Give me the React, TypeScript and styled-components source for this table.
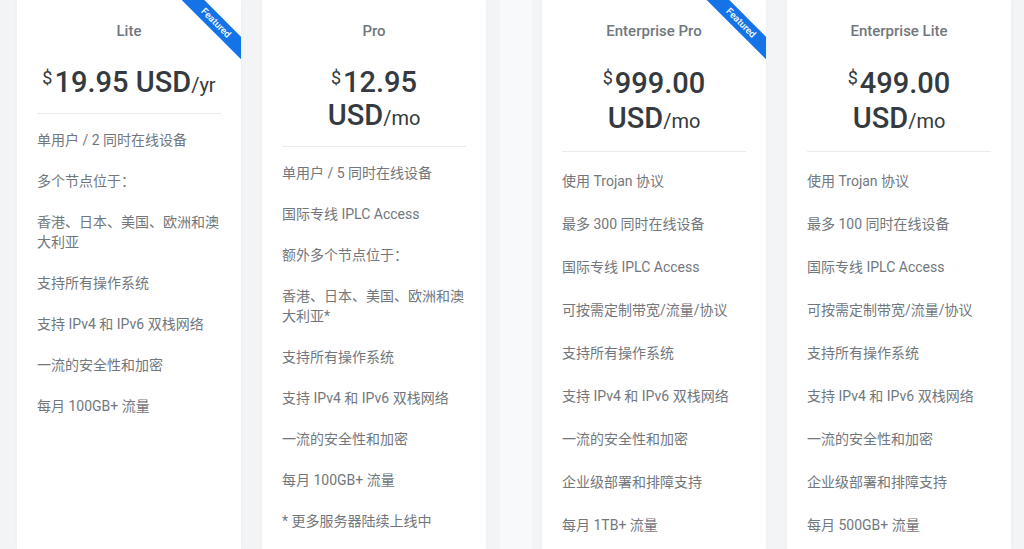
import React from "react";
import styled, { createGlobalStyle } from "styled-components";

const GlobalStyle = createGlobalStyle`
  html, body {
    margin: 0;
    padding: 0;
    background: #f3f4f6;
    overflow: hidden;
  }
  body {
    font-family: Roboto, "Noto Sans CJK SC", sans-serif;
  }
`;

type Plan = {
  name: string;
  amount: string;
  unit: string;
  featured?: boolean;
  stacked?: boolean;
  features: string[];
};

const GROUPS: { roomy: boolean; plans: Plan[] }[] = [
  {
    roomy: false,
    plans: [
      {
        name: "Lite",
        amount: "19.95",
        unit: "yr",
        featured: true,
        features: [
          "单用户 / 2 同时在线设备",
          "多个节点位于：",
          "香港、日本、美国、欧洲和澳大利亚",
          "支持所有操作系统",
          "支持 IPv4 和 IPv6 双栈网络",
          "一流的安全性和加密",
          "每月 100GB+ 流量",
        ],
      },
      {
        name: "Pro",
        amount: "12.95",
        unit: "mo",
        stacked: true,
        features: [
          "单用户 / 5 同时在线设备",
          "国际专线 IPLC Access",
          "额外多个节点位于：",
          "香港、日本、美国、欧洲和澳大利亚*",
          "支持所有操作系统",
          "支持 IPv4 和 IPv6 双栈网络",
          "一流的安全性和加密",
          "每月 100GB+ 流量",
          "* 更多服务器陆续上线中",
        ],
      },
    ],
  },
  {
    roomy: true,
    plans: [
      {
        name: "Enterprise Pro",
        amount: "999.00",
        unit: "mo",
        featured: true,
        stacked: true,
        features: [
          "使用 Trojan 协议",
          "最多 300 同时在线设备",
          "国际专线 IPLC Access",
          "可按需定制带宽/流量/协议",
          "支持所有操作系统",
          "支持 IPv4 和 IPv6 双栈网络",
          "一流的安全性和加密",
          "企业级部署和排障支持",
          "每月 1TB+ 流量",
        ],
      },
      {
        name: "Enterprise Lite",
        amount: "499.00",
        unit: "mo",
        stacked: true,
        features: [
          "使用 Trojan 协议",
          "最多 100 同时在线设备",
          "国际专线 IPLC Access",
          "可按需定制带宽/流量/协议",
          "支持所有操作系统",
          "支持 IPv4 和 IPv6 双栈网络",
          "一流的安全性和加密",
          "企业级部署和排障支持",
          "每月 500GB+ 流量",
        ],
      },
    ],
  },
];

export default function App() {
  return (
    <>
      <GlobalStyle />
      <Page>
        {GROUPS.map((group, gi) => (
          <React.Fragment key={gi}>
            {gi > 0 && (
              <Gutter>
                <GutterStrip />
              </Gutter>
            )}
            <Group>
              {group.plans.map((plan) => (
                <Card key={plan.name}>
                  {plan.featured && <Ribbon>Featured</Ribbon>}
                  <Title>{plan.name}</Title>
                  <Price roomy={group.roomy}>
                    <Currency>$</Currency>
                    {plan.amount}{" "}
                    <Unit stacked={plan.stacked}>
                      USD<Period>/{plan.unit}</Period>
                    </Unit>
                  </Price>
                  <Divider roomy={group.roomy} />
                  <Features roomy={group.roomy}>
                    {plan.features.map((f) => (
                      <li key={f}>{f}</li>
                    ))}
                  </Features>
                </Card>
              ))}
            </Group>
          </React.Fragment>
        ))}
      </Page>
    </>
  );
}

const Page = styled.main`
  display: flex;
  align-items: stretch;
  height: 549px;
  padding-left: 17px;
  box-sizing: border-box;
  overflow: hidden;
`;

const Group = styled.section`
  display: grid;
  grid-template-columns: 224px 224px;
  column-gap: 21px;
  align-items: stretch;
`;

const Gutter = styled.div`
  width: 56px;
  display: flex;
  padding-left: 14px;
  box-sizing: border-box;
`;

const GutterStrip = styled.div`
  width: 32px;
  background: #f8f9fa;
`;

const Card = styled.article`
  position: relative;
  overflow: hidden;
  background: #ffffff;
  box-shadow: 0 0 4px rgba(0, 0, 0, 0.04);
  padding: 21px 20px 20px;
`;

const Ribbon = styled.div`
  position: absolute;
  top: 15px;
  right: -25px;
  width: 100px;
  height: 16px;
  line-height: 16px;
  background: #1473e6;
  color: #ffffff;
  font-size: 9.5px;
  font-weight: 500;
  text-align: center;
  transform: rotate(45deg);
`;

const Title = styled.h3`
  margin: 0;
  font-size: 15px;
  line-height: 20px;
  font-weight: 500;
  color: #72777d;
  text-align: center;
`;

const Price = styled.div<{ roomy: boolean }>`
  margin-top: 25px;
  font-size: 29px;
  line-height: ${(p) => (p.roomy ? "35px" : "33px")};
  font-weight: 500;
  color: #343a40;
  text-align: center;
`;

const Currency = styled.span`
  font-size: 18px;
  line-height: 24px;
  font-weight: 400;
  vertical-align: top;
  margin-right: 2px;
`;

const Unit = styled.span<{ stacked?: boolean }>`
  display: ${(p) => (p.stacked ? "block" : "inline")};
`;

const Period = styled.span`
  font-size: 20px;
  font-weight: 400;
`;

const Divider = styled.hr<{ roomy: boolean }>`
  border: 0;
  border-top: 1px solid #e9ecef;
  margin: ${(p) => (p.roomy ? "12px 0 0" : "11px 0 0")};
`;

const Features = styled.ul<{ roomy: boolean }>`
  list-style: none;
  margin: 0;
  padding: ${(p) => (p.roomy ? "19px 0 0" : "16px 0 0")};
  display: flex;
  flex-direction: column;
  gap: ${(p) => (p.roomy ? "23px" : "21px")};

  li {
    font-size: 14px;
    line-height: 20px;
    color: #72777d;
  }
`;
